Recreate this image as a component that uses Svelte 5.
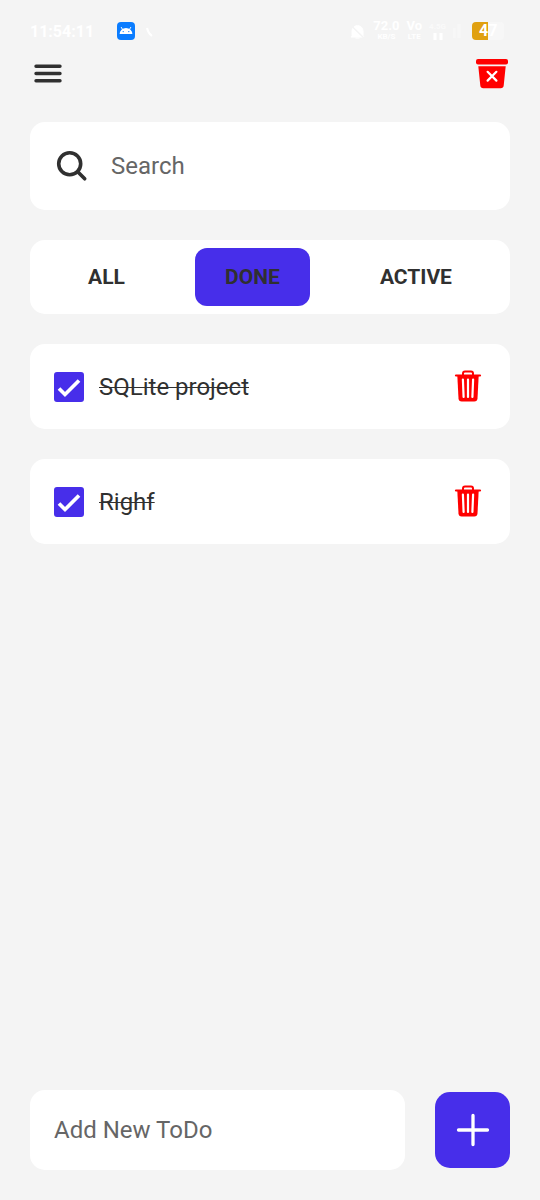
<script>
  let query = $state('');
  let draft = $state('');
  let filter = $state('DONE');
  let todos = $state([
    { id: 1, title: 'SQLite project', done: true },
    { id: 2, title: 'Righf', done: true }
  ]);
  const filters = ['ALL', 'DONE', 'ACTIVE'];

  const visible = $derived(
    todos.filter(
      (t) =>
        (filter === 'ALL' || (filter === 'DONE') === t.done) &&
        t.title.toLowerCase().includes(query.toLowerCase())
    )
  );

  function add(event) {
    event.preventDefault();
    if (!draft.trim()) return;
    todos.push({ id: Date.now(), title: draft.trim(), done: false });
    draft = '';
  }

  function remove(id) {
    todos = todos.filter((t) => t.id !== id);
  }
</script>

<div class="screen">
  <div class="status">
    <span class="clock">11:54:11</span>
    <svg class="app" width="18" height="18" viewBox="0 0 18 18" aria-hidden="true">
      <rect width="18" height="18" rx="4" fill="#0a7cff" />
      <path d="M2.600 12a6.400 6 0 0 1 12.800 0z" fill="#fff" />
      <path d="M5.600 7.500 4.300 5.400M12.400 7.500l1.300-2.100" stroke="#fff" stroke-width="1" stroke-linecap="round" />
      <circle cx="6.200" cy="9.600" r=".7" fill="#0a7cff" /><circle cx="11.800" cy="9.600" r=".7" fill="#0a7cff" />
    </svg>
    <svg class="call" width="10" height="14" viewBox="0 0 10 14" aria-hidden="true">
      <path d="M2 4q1 5 5 8" fill="none" stroke="#fff" stroke-width="2" />
    </svg>
    <div class="signals">
      <svg width="17" height="17" viewBox="0 0 17 17" aria-hidden="true">
        <path d="M3 12.500V8a5.500 5.500 0 0 1 11 0v4.500l1 1.500H2zM6.500 15h4" fill="#fff" stroke="#fff" />
        <path d="M1 1.500 16 16" stroke="#f4f4f4" stroke-width="1.500" />
      </svg>
      <span class="pair"><b>72.0</b><small>KB/S</small></span>
      <span class="pair"><b>Vo</b><small>LTE</small></span>
      <span class="pair net">
        <small>4.5G</small>
        <svg width="12" height="9" viewBox="0 0 12 9" aria-hidden="true">
          <path d="M3 1v7M9 1v7" stroke="#fff" stroke-width="3" />
        </svg>
      </span>
      <svg width="9" height="16" viewBox="0 0 9 16" aria-hidden="true">
        <path d="M1 5v10M6 1v14" stroke="#f7f7f7" stroke-width="3" />
      </svg>
    </div>
    <span class="battery">47</span>
  </div>

  <header>
    <button class="icon" aria-label="Menu">
      <svg width="36" height="36" viewBox="0 0 36 36">
        <path d="M6 10.300h24M6 17.500h24M6 24.800h24" stroke="#303030" stroke-width="3.400" stroke-linecap="round" />
      </svg>
    </button>
    <button class="icon" aria-label="Delete all" onclick={() => (todos = [])}>
      <svg width="36" height="36" viewBox="0 0 36 36">
        <rect x="2" y="3" width="32" height="5.500" rx="2" fill="#f00" />
        <path d="M4.300 10.300h27.400l-2 19.300a3 3 0 0 1-3 2.700H9.300a3 3 0 0 1-3-2.700z" fill="#f00" />
        <path d="m13.600 15.800 8.800 8.800m0-8.800-8.800 8.800" stroke="#fff" stroke-width="2.200" stroke-linecap="round" />
      </svg>
    </button>
  </header>

  <main>
    <label class="card search">
      <svg width="36" height="36" viewBox="0 0 36 36" aria-hidden="true">
        <circle cx="14.700" cy="15.800" r="11" fill="none" stroke="#303030" stroke-width="3.600" />
        <path d="m22.700 23.800 7 7" stroke="#303030" stroke-width="3.600" stroke-linecap="round" />
      </svg>
      <input type="text" placeholder="Search" aria-label="Search" bind:value={query} />
    </label>

    <nav class="card tabs">
      {#each filters as name}
        <button class:active={filter === name} aria-pressed={filter === name} onclick={() => (filter = name)}>{name}</button>
      {/each}
    </nav>

    <ul>
      {#each visible as todo (todo.id)}
        <li class="card item">
          <label>
            <span class="box">
              <input type="checkbox" bind:checked={todo.done} />
              {#if todo.done}
                <svg width="30" height="30" viewBox="0 0 30 30" aria-hidden="true">
                  <path d="m5 16.500 6 6L25 8.500" fill="none" stroke="#fff" stroke-width="3.700" />
                </svg>
              {/if}
            </span>
            <span class:done={todo.done}>{todo.title}</span>
          </label>
          <button class="icon" aria-label="Delete {todo.title}" onclick={() => remove(todo.id)}>
            <svg width="36" height="36" viewBox="0 0 36 36">
              <path d="M13 6.500V4.500q0-2 2-2h6q2 0 2 2v2" fill="none" stroke="#f00" stroke-width="2" />
              <path d="M6 6.500h24" stroke="#f00" stroke-width="2.200" stroke-linecap="round" />
              <path d="M7.300 6.500h21.400l-1.200 23q-.2 3-3.200 3H11.700q-3 0-3.200-3z" fill="#f00" />
              <path d="m12.900 10.500.7 17.500M18 10.500v17.500M23.100 10.500l-.7 17.500" stroke="#fff" stroke-width="2.200" stroke-linecap="round" />
            </svg>
          </button>
        </li>
      {/each}
    </ul>
  </main>

  <form onsubmit={add}>
    <input class="card" type="text" placeholder="Add New ToDo" aria-label="Add New ToDo" bind:value={draft} />
    <button class="add" aria-label="Add">
      <svg width="40" height="40" viewBox="0 0 40 40">
        <path d="M20 5.500v29M5.500 20h29" stroke="#fff" stroke-width="3.300" stroke-linecap="round" />
      </svg>
    </button>
  </form>
</div>

<style>
  :global(body) {
    background: #f4f4f4;
  }
  .screen {
    min-height: 100vh;
    box-sizing: border-box;
    display: flex;
    flex-direction: column;
    padding: 16px 30px 30px;
    font-family: Roboto, "Liberation Sans", sans-serif;
    font-size: 24px;
    color: #303030;
  }
  svg {
    display: block;
    flex: none;
  }
  button {
    border: 0;
    padding: 0;
    background: none;
    font: inherit;
    color: inherit;
    cursor: pointer;
  }
  input {
    font: inherit;
    color: inherit;
  }
  input::placeholder {
    color: #666;
    opacity: 1;
  }
  .status {
    display: flex;
    align-items: center;
    height: 30px;
    color: #fff;
  }
  .clock {
    font-size: 16px;
    font-weight: 700;
    width: 62px;
    white-space: nowrap;
  }
  .app {
    margin-left: 25px;
  }
  .call {
    margin-left: 10px;
  }
  .signals {
    display: flex;
    align-items: center;
    gap: 7px;
    margin-left: auto;
  }
  .pair {
    display: flex;
    flex-direction: column;
    align-items: center;
  }
  .pair b {
    font-size: 13px;
    font-weight: 700;
    line-height: 12px;
  }
  .pair small {
    font-size: 8px;
    font-weight: 700;
    line-height: 10px;
  }
  .net {
    color: #fafafa;
  }
  .battery {
    box-sizing: border-box;
    width: 32px;
    height: 18px;
    margin: 0 6px 0 10px;
    padding-left: 7px;
    border-radius: 4px;
    background: linear-gradient(90deg, #e0a010 16px, #f7f7f7 16px);
    font-size: 16px;
    font-weight: 700;
    line-height: 18px;
  }
  header {
    display: flex;
    justify-content: space-between;
    height: 36px;
    margin: 10px 0 30px;
  }
  main {
    flex: 1;
    display: flex;
    flex-direction: column;
    gap: 30px;
  }
  .card {
    background: #fff;
    border-radius: 15px;
  }
  .search {
    display: flex;
    align-items: center;
    gap: 20px;
    height: 88px;
    padding: 0 25px;
  }
  .search input {
    flex: 1;
    min-width: 0;
    border: 0;
    padding: 0;
    outline: 0;
    background: none;
  }
  .tabs {
    display: flex;
    justify-content: space-around;
    padding: 8px;
  }
  .tabs button {
    height: 58px;
    padding: 0 30px;
    border-radius: 12px;
    font-size: 21px;
    font-weight: 700;
  }
  .tabs .active {
    background: #472eea;
  }
  ul {
    list-style: none;
    margin: 0;
    padding: 0;
    display: flex;
    flex-direction: column;
    gap: 30px;
  }
  .item {
    display: flex;
    align-items: center;
    justify-content: space-between;
    height: 85px;
    padding: 0 24px;
  }
  .item label {
    display: flex;
    align-items: center;
    gap: 15px;
  }
  .done {
    text-decoration: line-through;
    text-decoration-thickness: 1px;
  }
  .box {
    display: grid;
  }
  .box > :global(*) {
    grid-area: 1 / 1;
  }
  .box svg {
    pointer-events: none;
  }
  .box input {
    appearance: none;
    box-sizing: border-box;
    width: 30px;
    height: 30px;
    margin: 0;
    border: 3px solid #472eea;
    border-radius: 3px;
  }
  .box input:checked {
    background: #472eea;
  }
  form {
    display: flex;
    align-items: center;
    gap: 30px;
  }
  form input {
    flex: 1;
    min-width: 0;
    box-sizing: border-box;
    height: 80px;
    border: 0;
    padding: 0 24px;
    outline: 0;
  }
  .add {
    display: grid;
    place-items: center;
    width: 75px;
    height: 76px;
    border-radius: 15px;
    background: #472eea;
  }
</style>
